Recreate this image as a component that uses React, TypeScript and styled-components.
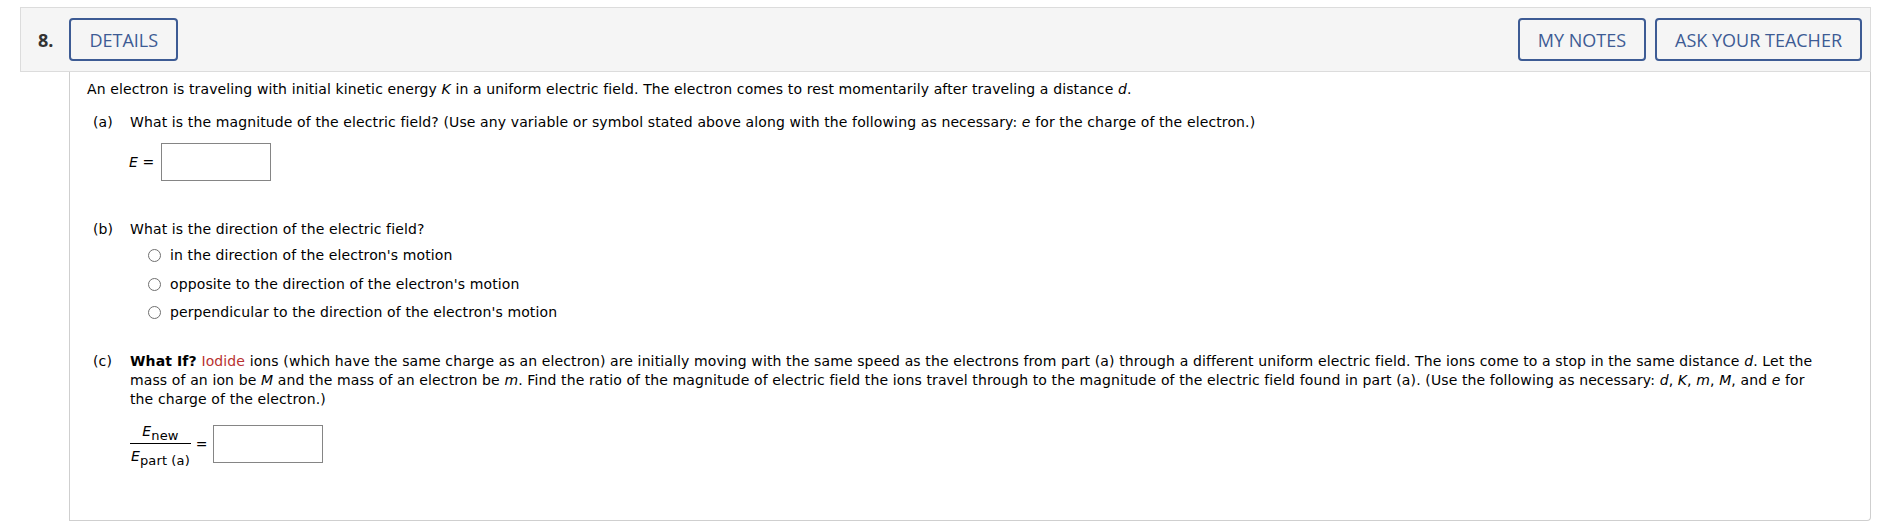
import React from "react";
import styled, { createGlobalStyle } from "styled-components";

const GlobalStyle = createGlobalStyle`
  html, body {
    margin: 0;
    padding: 0;
    background: #fff;
  }
  body {
    font-family: "DejaVu Sans", Verdana, sans-serif;
  }
`;

const Page = styled.div`
  padding: 7px 12px 0 20px;
`;

const Header = styled.div`
  display: flex;
  align-items: center;
  height: 63px;
  padding: 0 8px 0 17px;
  background: #f5f5f5;
  border: 1px solid #dcdcdc;
`;

const QuestionNumber = styled.span`
  font: 700 18px "Open Sans", sans-serif;
  color: #333;
  margin-right: 16px;
`;

const HeaderActions = styled.div`
  display: flex;
  gap: 9px;
  margin-left: auto;
`;

const HeaderButton = styled.button`
  height: 43px;
  padding: 0 18px;
  border: 2px solid #3d5b94;
  border-radius: 4px;
  background: transparent;
  color: #3d5b94;
  font: 400 18px "Open Sans", sans-serif;
  text-transform: uppercase;
  cursor: pointer;
`;

const Body = styled.div`
  margin-left: 49px;
  border: 1px solid #cfcfcf;
  border-top: none;
  border-bottom-right-radius: 4px;
  padding: 8px 50px 55px 17px;
  font-size: 14px;
  letter-spacing: 0.12px;
  line-height: 19px;
  color: #000;
`;

const Part = styled.div<{ $gap: number }>`
  display: grid;
  grid-template-columns: 37px 1fr;
  margin: ${(p) => p.$gap}px 0 0 6px;
`;

const Answer = styled.div<{ $gap: number }>`
  display: flex;
  align-items: center;
  margin-top: ${(p) => p.$gap}px;
`;

const AnswerLabel = styled.span`
  margin: 0 7px 0 -1px;
  white-space: nowrap;
`;

const AnswerBox = styled.input`
  box-sizing: border-box;
  width: 110px;
  height: 38px;
  border: 1px solid #858585;
  padding: 0 4px;
  font: inherit;
`;

const Options = styled.div`
  display: flex;
  flex-direction: column;
  gap: 9.5px;
  margin-top: 7px;
`;

const Option = styled.label`
  display: flex;
  align-items: center;
`;

const Radio = styled.input`
  appearance: none;
  box-sizing: border-box;
  flex: none;
  width: 13px;
  height: 13px;
  margin: 0 9px 0 18px;
  border: 1px solid #6f6f6f;
  border-radius: 50%;
  background: #fff;
`;

const Var = styled.i``;

const Strong = styled.b``;

const Term = styled.span`
  color: #b8312f;
`;

const Fraction = styled.span`
  display: inline-flex;
  flex-direction: column;
  align-items: center;
  margin-right: 5px;
  line-height: 17px;
`;

const FractionTerm = styled.span`
  padding: 0 1px;
`;

const FractionBar = styled.span`
  align-self: stretch;
  height: 1px;
  margin: 3px 0 4px;
  background: #000;
`;

const Sub = styled.sub`
  font-size: 13px;
  vertical-align: -4px;
  line-height: 0;
`;

const Equals = styled.span`
  margin-right: 5px;
`;

const App: React.FC = () => (
  <>
    <GlobalStyle />
    <Page>
      <Header>
        <QuestionNumber>8.</QuestionNumber>
        <HeaderButton>Details</HeaderButton>
        <HeaderActions>
          <HeaderButton>My Notes</HeaderButton>
          <HeaderButton>Ask Your Teacher</HeaderButton>
        </HeaderActions>
      </Header>
      <Body>
        <div>
          An electron is traveling with initial kinetic energy <Var>K</Var> in a uniform electric field. The electron comes to
          rest momentarily after traveling a distance <Var>d</Var>.
        </div>

        <Part $gap={14}>
          <span>(a)</span>
          <div>
            What is the magnitude of the electric field? (Use any variable or symbol stated above along with the following as
            necessary: <Var>e</Var> for the charge of the electron.)
            <Answer $gap={11}>
              <AnswerLabel>
                <Var>E</Var> =
              </AnswerLabel>
              <AnswerBox type="text" aria-label="E" />
            </Answer>
          </div>
        </Part>

        <Part $gap={39}>
          <span>(b)</span>
          <div>
            What is the direction of the electric field?
            <Options>
              <Option>
                <Radio type="radio" name="direction" />
                in the direction of the electron's motion
              </Option>
              <Option>
                <Radio type="radio" name="direction" />
                opposite to the direction of the electron's motion
              </Option>
              <Option>
                <Radio type="radio" name="direction" />
                perpendicular to the direction of the electron's motion
              </Option>
            </Options>
          </div>
        </Part>

        <Part $gap={30}>
          <span>(c)</span>
          <div>
            <Strong>What If?</Strong> <Term>Iodide</Term> ions (which have the same charge as an electron) are initially moving
            with the same speed as the electrons from part (a) through a different uniform electric field. The ions come to a stop
            in the same distance <Var>d</Var>. Let the mass of an ion be <Var>M</Var> and the mass of an electron be <Var>m</Var>.
            Find the ratio of the magnitude of electric field the ions travel through to the magnitude of the electric field found
            in part (a). (Use the following as necessary: <Var>d</Var>, <Var>K</Var>, <Var>m</Var>, <Var>M</Var>, and{" "}
            <Var>e</Var> for the charge of the electron.)
            <Answer $gap={14}>
              <Fraction>
                <FractionTerm>
                  <Var>E</Var>
                  <Sub>new</Sub>
                </FractionTerm>
                <FractionBar />
                <FractionTerm>
                  <Var>E</Var>
                  <Sub>part (a)</Sub>
                </FractionTerm>
              </Fraction>
              <Equals>=</Equals>
              <AnswerBox type="text" aria-label="ratio" />
            </Answer>
          </div>
        </Part>
      </Body>
    </Page>
  </>
);

export default App;
